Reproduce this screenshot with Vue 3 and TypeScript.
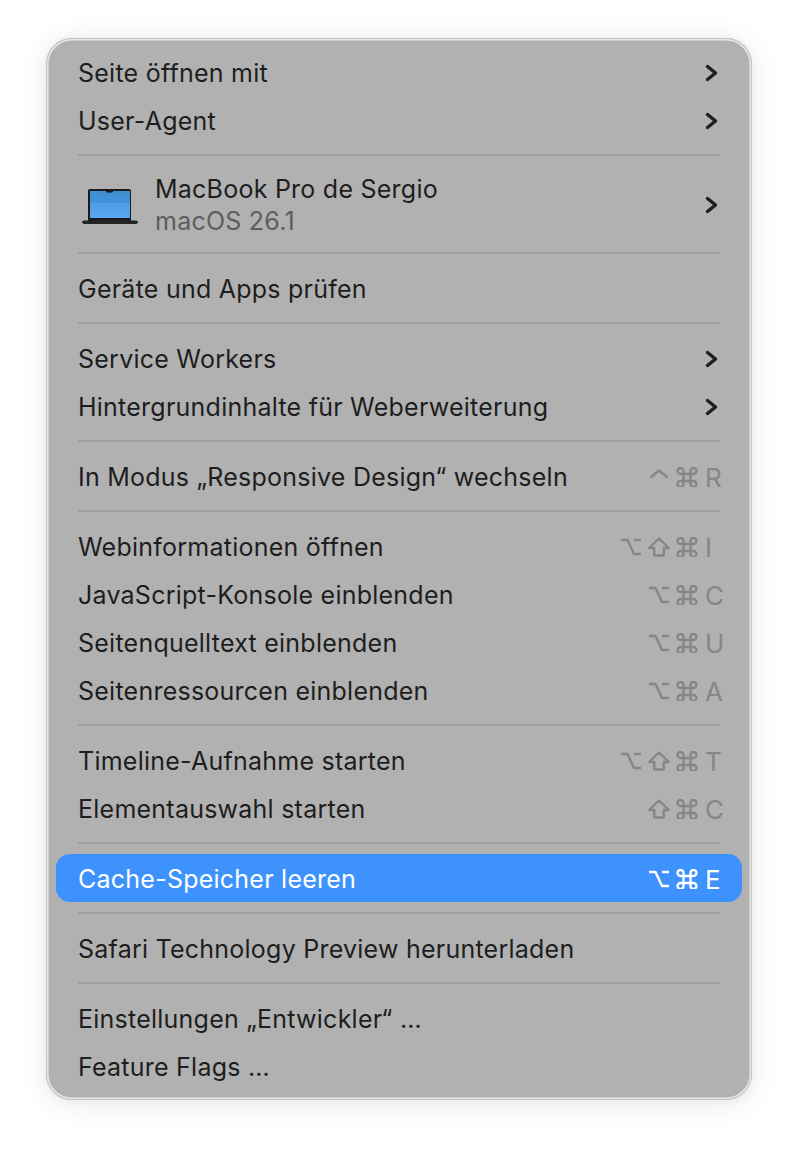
<script setup lang="ts">
type Key = 'ctrl' | 'opt' | 'shift' | 'cmd'
interface Row {
  label: string
  arrow?: boolean
  keys?: Key[]
  letter?: string
  active?: boolean
}
const groups: Row[][] = [
  [{ label: 'Seite öffnen mit', arrow: true }, { label: 'User-Agent', arrow: true }],
  [],
  [{ label: 'Geräte und Apps prüfen' }],
  [{ label: 'Service Workers', arrow: true }, { label: 'Hintergrundinhalte für Weberweiterung', arrow: true }],
  [{ label: 'In Modus „Responsive Design“ wechseln', keys: ['ctrl', 'cmd'], letter: 'R' }],
  [
    { label: 'Webinformationen öffnen', keys: ['opt', 'shift', 'cmd'], letter: 'I' },
    { label: 'JavaScript-Konsole einblenden', keys: ['opt', 'cmd'], letter: 'C' },
    { label: 'Seitenquelltext einblenden', keys: ['opt', 'cmd'], letter: 'U' },
    { label: 'Seitenressourcen einblenden', keys: ['opt', 'cmd'], letter: 'A' },
  ],
  [
    { label: 'Timeline-Aufnahme starten', keys: ['opt', 'shift', 'cmd'], letter: 'T' },
    { label: 'Elementauswahl starten', keys: ['shift', 'cmd'], letter: 'C' },
  ],
  [{ label: 'Cache-Speicher leeren', keys: ['opt', 'cmd'], letter: 'E', active: true }],
  [{ label: 'Safari Technology Preview herunterladen' }],
  [{ label: 'Einstellungen „Entwickler“ …' }, { label: 'Feature Flags …' }],
]
const screenDots = [17, 22, 37, 43]
</script>

<template>
  <div class="page">
    <div class="menu">
      <template v-for="(group, g) in groups" :key="g">
        <div v-if="g > 0" class="sep"></div>
        <div v-if="g === 1" class="device">
          <svg class="laptop" width="60" height="38" viewBox="0 0 60 38">
            <defs>
              <linearGradient id="scr" x1="0" y1="0" x2="0" y2="1">
                <stop offset="0" stop-color="#3f8fd4" />
                <stop offset="0.45" stop-color="#4193dc" />
                <stop offset="1" stop-color="#549fee" />
              </linearGradient>
              <pattern id="dith" width="4" height="2" patternUnits="userSpaceOnUse">
                <rect width="1.500" height="1" fill="#67aef8" />
                <rect x="2" y="1" width="1.500" height="1" fill="#67aef8" />
              </pattern>
            </defs>
            <path d="M9 35V5a2 2 0 0 1 2-2h39a2 2 0 0 1 2 2V35z" fill="#1b1b1d" />
            <rect x="11" y="5" width="40" height="27" fill="url(#scr)" />
            <rect x="11" y="17" width="40" height="15" fill="url(#dith)" />
            <rect v-for="d in screenDots" :key="d" :x="d" y="7.500" width="1.500" height="1.500" fill="#5f7f9e" />
            <rect x="27" y="4" width="7" height="2.500" rx="1" fill="#1b1b1d" />
            <path d="M3 36Q3 34.500 5 34.500H57Q59 34.500 59 36Q59 38 55 38H7Q3 38 3 36z" fill="#242426" />
          </svg>
          <div class="device-text">
            <div class="device-name">MacBook Pro de Sergio</div>
            <div class="device-os">macOS 26.1</div>
          </div>
          <svg class="chev" width="16" height="20" viewBox="0 0 16 20"><path d="M3.500 3.500 11.500 10 3.500 16.500" /></svg>
        </div>
        <div v-for="row in group" :key="row.label" class="row" :class="{ active: row.active }">
          <span class="label">{{ row.label }}</span>
          <svg v-if="row.arrow" class="chev" width="16" height="20" viewBox="0 0 16 20"><path d="M3.500 3.500 11.500 10 3.500 16.500" /></svg>
          <span v-if="row.keys" class="shortcut">
            <template v-for="k in row.keys" :key="k">
              <svg v-if="k === 'ctrl'" class="key" width="22" height="20" viewBox="0 0 22 20"><path d="M2.500 10.500 11 3.500 19.500 10.500" /></svg>
              <svg v-else-if="k === 'opt'" class="key" width="22" height="20" viewBox="0 0 22 20"><path d="M1 3H7.500L14 17H21M14 3H21" /></svg>
              <svg v-else-if="k === 'shift'" class="key" width="22" height="20" viewBox="0 0 22 20"><path d="M11 1.500 20.800 11H15.800V18.500H6.200V11H1.200z" /></svg>
              <svg v-else class="key" width="22" height="20" viewBox="0 0 22 20"><path d="M7.500 7H14.500V14H7.500zM7.500 7V4.500A3 3 0 1 0 4.500 7H17.500A3 3 0 1 0 14.500 4.500V16.500A3 3 0 1 0 17.500 14H4.500A3 3 0 1 0 7.500 16.500z" /></svg>
            </template>
            <span class="letter">{{ row.letter }}</span>
          </span>
        </div>
      </template>
    </div>
  </div>
</template>

<style scoped>
.page {
  width: 798px;
  height: 1154px;
  box-sizing: border-box;
  padding: 38px 46px 54px;
  background: #fff;
  font-family: Inter, "Liberation Sans", sans-serif;
}
.menu {
  display: flex;
  flex-direction: column;
  box-sizing: border-box;
  width: 706px;
  height: 1062px;
  padding: 11px 10px 9px;
  border-radius: 26px;
  background: #b1b1b1;
  box-shadow:
    inset 0 0 0 1px #c4c4c4,
    inset 0 0 0 2.500px #e6e6e6,
    0 3px 30px rgba(0, 0, 0, 0.09),
    0 1px 8px rgba(0, 0, 0, 0.05);
}
.row {
  display: flex;
  flex: none;
  align-items: center;
  justify-content: space-between;
  box-sizing: border-box;
  height: 48px;
  padding: 0 22px;
  border-radius: 14px;
  color: #1e1e1e;
  font-size: 25px;
  letter-spacing: 0.24px;
}
.row.active {
  margin-top: -1px;
  margin-bottom: 1px;
  padding-top: 2px;
  background: #3e92fd;
  color: #fff;
}
.sep {
  flex: none;
  height: 2px;
  margin: 9px 22px 11px;
  background: #9e9e9e;
}
.device {
  display: flex;
  flex: none;
  align-items: center;
  height: 76px;
  padding: 0 22px 0 23px;
  color: #1e1e1e;
  font-size: 25px;
  letter-spacing: 0.24px;
}
.laptop {
  flex: none;
  margin-right: 16px;
}
.device-text {
  flex: 1;
  line-height: 32px;
}
.device-os {
  color: #5e5e5e;
}
.chev {
  flex: none;
}
.chev path {
  fill: none;
  stroke: #1e1e1e;
  stroke-width: 3.400;
  stroke-linecap: round;
  stroke-linejoin: round;
}
.shortcut {
  display: flex;
  align-items: center;
  gap: 6px;
  color: #868686;
}
.active .shortcut {
  color: #fff;
}
.key {
  flex: none;
}
.key path {
  fill: none;
  stroke: currentColor;
  stroke-width: 2.400;
  stroke-linejoin: round;
}
.letter {
  width: 15px;
  margin-left: 1px;
  font-size: 26px;
  white-space: nowrap;
}
</style>
